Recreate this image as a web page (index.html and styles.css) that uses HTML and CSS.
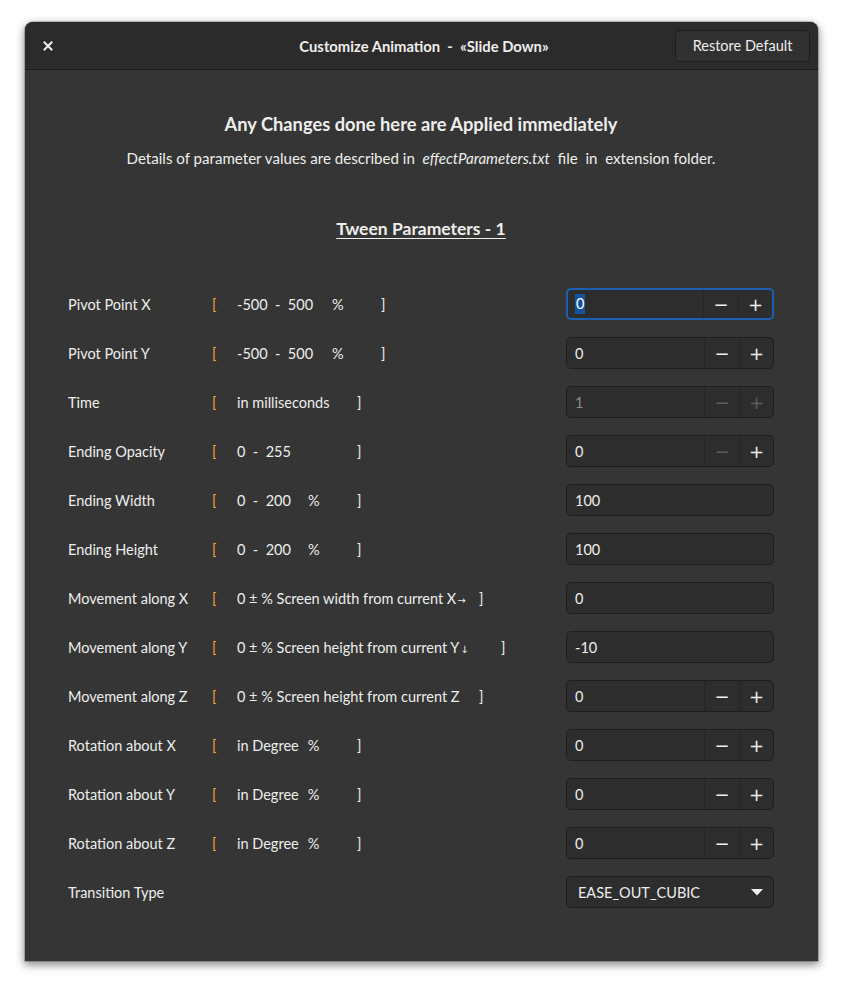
FILE: index.html
```html
<!DOCTYPE html>
<html>
<head>
<meta charset="utf-8">
<link rel="stylesheet" href="styles.css">
</head>
<body>
<div class="window">
  <header class="titlebar">
    <div class="tb-left">
      <button class="close" aria-label="Close">
        <svg width="10" height="10" viewBox="0 0 10 10"><path d="M1.5 1.5 L8.5 8.5 M8.5 1.5 L1.5 8.5" stroke="#eeeeec" stroke-width="2" stroke-linecap="square"/></svg>
      </button>
    </div>
    <div class="title">Customize Animation&nbsp; - &nbsp;«Slide Down»</div>
    <div class="tb-right">
      <button class="restore">Restore Default</button>
    </div>
  </header>
  <main class="content">
    <h1 class="headline">Any Changes done here are Applied immediately</h1>
    <p class="sub">Details of parameter values are described in&nbsp; <i>effectParameters.txt</i>&nbsp; file&nbsp; in&nbsp; extension folder.</p>
    <h2 class="section">Tween Parameters - 1</h2>

    <div class="params">
      <div class="row">
        <span class="label">Pivot Point X</span>
        <span class="range"><span class="br">[</span><span class="desc w164"><span>-500&nbsp; -&nbsp; 500</span><span class="p19">%</span></span><span class="cb">]</span></span>
        <div class="spin focused"><span class="val"><span class="sel">0</span></span><span class="sb">−</span><span class="sb">+</span></div>
      </div>
      <div class="row">
        <span class="label">Pivot Point Y</span>
        <span class="range"><span class="br">[</span><span class="desc w164"><span>-500&nbsp; -&nbsp; 500</span><span class="p19">%</span></span><span class="cb">]</span></span>
        <div class="spin"><span class="val">0</span><span class="sb">−</span><span class="sb">+</span></div>
      </div>
      <div class="row">
        <span class="label">Time</span>
        <span class="range"><span class="br">[</span><span class="desc w140"><span>in milliseconds</span></span><span class="cb">]</span></span>
        <div class="spin disabled"><span class="val">1</span><span class="sb">−</span><span class="sb">+</span></div>
      </div>
      <div class="row">
        <span class="label">Ending Opacity</span>
        <span class="range"><span class="br">[</span><span class="desc w140"><span>0&nbsp; -&nbsp; 255</span></span><span class="cb">]</span></span>
        <div class="spin"><span class="val">0</span><span class="sb off">−</span><span class="sb">+</span></div>
      </div>
      <div class="row">
        <span class="label">Ending Width</span>
        <span class="range"><span class="br">[</span><span class="desc w140"><span>0&nbsp; -&nbsp; 200</span><span class="p17">%</span></span><span class="cb">]</span></span>
        <div class="entry"><span class="val">100</span></div>
      </div>
      <div class="row">
        <span class="label">Ending Height</span>
        <span class="range"><span class="br">[</span><span class="desc w140"><span>0&nbsp; -&nbsp; 200</span><span class="p17">%</span></span><span class="cb">]</span></span>
        <div class="entry"><span class="val">100</span></div>
      </div>
      <div class="row">
        <span class="label">Movement along X</span>
        <span class="range"><span class="br">[</span><span class="desc w262"><span>0 ± % Screen width from current X<span class="arr">→</span></span></span><span class="cb">]</span></span>
        <div class="entry"><span class="val">0</span></div>
      </div>
      <div class="row">
        <span class="label">Movement along Y</span>
        <span class="range"><span class="br">[</span><span class="desc w284"><span>0 ± % Screen height from current Y<span class="arr">↓</span></span></span><span class="cb">]</span></span>
        <div class="entry"><span class="val">-10</span></div>
      </div>
      <div class="row">
        <span class="label">Movement along Z</span>
        <span class="range"><span class="br">[</span><span class="desc w262"><span>0 ± % Screen height from current Z</span></span><span class="cb">]</span></span>
        <div class="spin"><span class="val">0</span><span class="sb">−</span><span class="sb">+</span></div>
      </div>
      <div class="row">
        <span class="label">Rotation about X</span>
        <span class="range"><span class="br">[</span><span class="desc w140"><span>in Degree</span><span class="p9">%</span></span><span class="cb">]</span></span>
        <div class="spin"><span class="val">0</span><span class="sb">−</span><span class="sb">+</span></div>
      </div>
      <div class="row">
        <span class="label">Rotation about Y</span>
        <span class="range"><span class="br">[</span><span class="desc w140"><span>in Degree</span><span class="p9">%</span></span><span class="cb">]</span></span>
        <div class="spin"><span class="val">0</span><span class="sb">−</span><span class="sb">+</span></div>
      </div>
      <div class="row">
        <span class="label">Rotation about Z</span>
        <span class="range"><span class="br">[</span><span class="desc w140"><span>in Degree</span><span class="p9">%</span></span><span class="cb">]</span></span>
        <div class="spin"><span class="val">0</span><span class="sb">−</span><span class="sb">+</span></div>
      </div>
      <div class="row">
        <span class="label">Transition Type</span>
        <span class="range"></span>
        <div class="dropdown"><span class="val">EASE_OUT_CUBIC</span>
          <svg class="caret" width="12" height="7" viewBox="0 0 12 7"><path d="M0 0 H12 L6 6.5 Z" fill="#eeeeec"/></svg>
        </div>
      </div>
    </div>
  </main>
</div>
</body>
</html>
```

FILE: styles.css
```css
* { box-sizing: border-box; }
html, body { margin: 0; padding: 0; background: #ffffff; }
body {
  font-family: "Lato", "Noto Sans", sans-serif;
  font-size: 14.5px;
  color: #eeeeec;
  padding: 22px 25px 28px 25px;
}
.window {
  width: 793px;
  height: 939px;
  background: #353535;
  border-radius: 8px 8px 0 0;
  box-shadow: 0 3px 9px 1px rgba(0,0,0,0.45), 0 0 0 1px rgba(0,0,0,0.18);
  overflow: hidden;
  display: flex;
  flex-direction: column;
}
.titlebar {
  height: 48px;
  background: #2b2b2b;
  border-bottom: 1px solid #1b1b1b;
  display: grid;
  grid-template-columns: 1fr auto 1fr;
  align-items: center;
  padding: 0 8px 0 13px;
}
.tb-left { display: flex; }
.tb-right { display: flex; justify-content: flex-end; }
.close {
  width: 20px; height: 20px;
  background: none; border: none; padding: 0;
  display: flex; align-items: center; justify-content: center;
}
.title {
  text-align: center;
  font-weight: 700;
  font-size: 14.8px;
  white-space: pre;
}
.restore {
  width: 135px; height: 32px;
  background: #313131;
  border: 1px solid #1c1c1c;
  border-radius: 5px;
  color: #eeeeec;
  font: inherit;
  font-size: 14.5px;
}
.content {
  flex: 1;
  padding: 44px 44px 0 43px;
}
.headline {
  margin: 0;
  font-size: 18.3px;
  font-weight: 700;
  text-align: center;
  line-height: 20px;
}
.sub {
  margin: 14px 0 0 0;
  text-align: center;
  line-height: 20px;
  font-size: 15.1px;
}
.section {
  margin: 51px 0 0 0;
  text-align: center;
  font-size: 17.5px;
  font-weight: 700;
  line-height: 20px;
  text-decoration: underline;
  text-underline-offset: 3px;
}
.params {
  margin-top: 49px;
  display: flex;
  flex-direction: column;
  gap: 17px;
}
.row {
  display: grid;
  grid-template-columns: 144px 1fr 208px;
  align-items: center;
  height: 32px;
}
.range { display: flex; align-items: center; white-space: nowrap; }
.br { color: #f5a431; width: 5px; }
.cb { color: #eeeeec; }
.desc { display: flex; padding-left: 20px; white-space: pre; }
.w140 { width: 140px; }
.w164 { width: 164px; }
.w262 { width: 262px; }
.w284 { width: 284px; }
.p19 { margin-left: 19px; }
.p17 { margin-left: 17px; }
.p9 { margin-left: 9px; }
.arr { font-family: "DejaVu Sans", sans-serif; font-size: 10px; margin-left: 1px; }

.spin, .entry, .dropdown {
  height: 32px;
  background: #2d2d2d;
  border: 1px solid #1e1e1e;
  border-radius: 5px;
  display: flex;
  align-items: stretch;
}
.val {
  flex: 1;
  display: flex;
  align-items: center;
  padding-left: 8px;
}
.sel {
  background: #15539e;
  color: #ffffff;
  padding: 1px 1px;
  line-height: 18px;
}
.sb {
  width: 35px;
  border-left: 1px solid #262626;
  display: flex; align-items: center; justify-content: center;
  font-size: 18px;
  font-family: "DejaVu Sans", sans-serif;
  color: #eeeeec;
}
.sb:last-child { width: 34px; }
.sb.off { color: #5e5e5e; }
.focused { border: 2px solid #1b5fb2; }
.focused .val { padding-left: 7px; }
.disabled .val { color: #8b8b8b; }
.disabled .sb { color: #5e5e5e; }
.dropdown .val { padding-left: 11px; }
.caret { align-self: center; margin-right: 10px; }
```
